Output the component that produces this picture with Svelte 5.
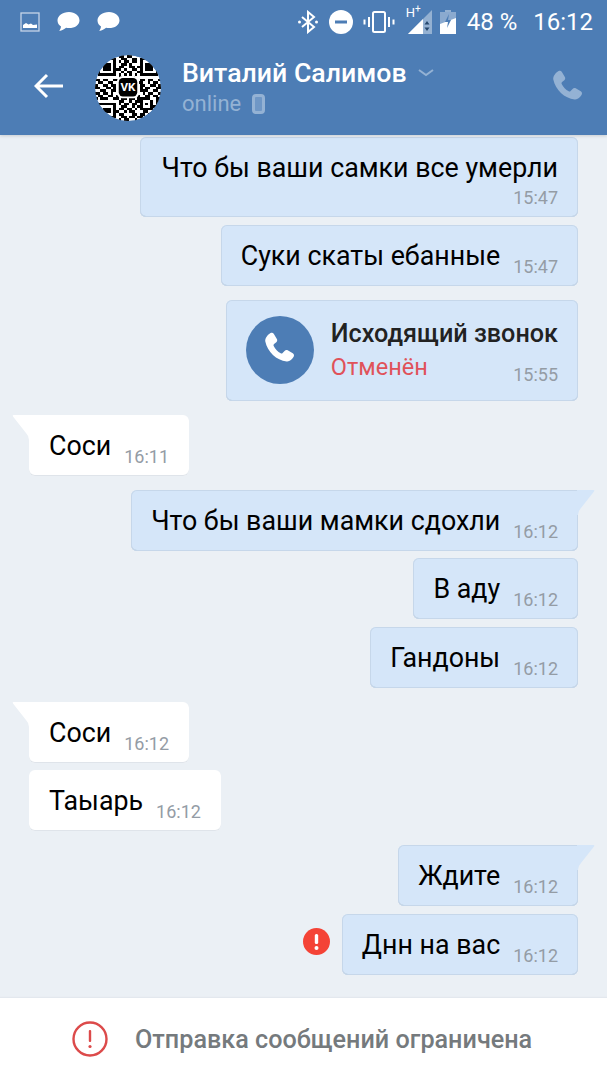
<script lang="ts">
	const RIGHT = 'right';
	const LEFT = 'left';

	const groups = [
		[
			{ side: RIGHT, text: 'Что бы ваши самки все умерли', time: '15:47', stacked: true },
			{ side: RIGHT, text: 'Суки скаты ебанные', time: '15:47' }
		],
		[{ side: RIGHT, call: true, time: '15:55' }],
		[{ side: LEFT, text: 'Соси', time: '16:11', tail: true }],
		[
			{ side: RIGHT, text: 'Что бы ваши мамки сдохли', time: '16:12', tail: true },
			{ side: RIGHT, text: 'В аду', time: '16:12' },
			{ side: RIGHT, text: 'Гандоны', time: '16:12' }
		],
		[
			{ side: LEFT, text: 'Соси', time: '16:12', tail: true },
			{ side: LEFT, text: 'Таыарь', time: '16:12' }
		],
		[
			{ side: RIGHT, text: 'Ждите', time: '16:12', tail: true },
			{ side: RIGHT, text: 'Днн на вас', time: '16:12', failed: true }
		]
	];

	// rough QR pattern, 25 x 25 modules, the logo sits on top of the middle
	const qrRows = [
		'0000000001101100000000000',
		'0111111100110011011111110',
		'0100000101011011010000010',
		'0101110100110100010111010',
		'0101110101100110110111010',
		'0101110111010011010111010',
		'0100000100101100110000010',
		'0111111101010101011111110',
		'0000000001100110000000000',
		'1101100111011001011011001',
		'0110011001100110110010110',
		'1001101100000000011001101',
		'1100110100000000010110011',
		'0011001100000000011100110',
		'1101101000000000001011001',
		'0110011011011001100110110',
		'1011100110110110111110011',
		'0000000001100101110001011',
		'0111111101011011010101010',
		'0100000100110010110001101',
		'0101110101101101011111010',
		'0101110110010110001100110',
		'0100000101100011011011000',
		'0111111100110110110110000',
		'0000000001011001000000000'
	];
	const qrCells = qrRows.flatMap((row, y) =>
		[...row].flatMap((c, x) => (c === '1' ? [{ x, y }] : []))
	);

	const phone =
		'M6.6 2.3c.7-.4 1.5-.2 1.900.500l1.700 2.900c.400.600.200 1.400-.300 1.800L8.600 8.600c-.300.300-.400.700-.200 1.100.900 1.800 2.300 3.200 4 4.200.400.200.800.100 1.100-.200l1.100-1.200c.500-.500 1.200-.600 1.800-.300l2.900 1.700c.700.400.900 1.300.500 2-.900 1.500-2.300 2.900-4 2.700C10 18.100 4.800 12.900 3.600 7.200 3.300 5.300 5 3.200 6.600 2.300z';
</script>

<div class="screen">
	<header class="top">
		<div class="status">
			<div class="status-left">
				<svg width="20" height="20" viewBox="0 0 20 20" aria-hidden="true">
					<rect x="1" y="1" width="18" height="18" fill="none" stroke="#c5d5e8" stroke-width="1.300" />
					<path d="M3 16v-3l3-2 2.500 1.500 2.500-1 2 1.500 4-.5V16z" fill="#fff" />
				</svg>
				<svg width="24" height="22" viewBox="0 0 24 22" aria-hidden="true">
					<path d="M13 1C6.500 1 1.500 4.800 1.500 9.600c0 2.600 1.300 4.600 3.500 6-.1 1.500-.8 3-1.700 4.400 2.600-.5 5-1.800 6.800-3.200 1 .2 1.900.3 2.900.3 6 0 10.500-3.300 10.500-7.700C23.500 4.700 19 1 13 1z" fill="#fff" />
				</svg>
				<svg width="24" height="22" viewBox="0 0 24 22" aria-hidden="true">
					<path d="M13 1C6.500 1 1.500 4.800 1.500 9.600c0 2.600 1.300 4.600 3.500 6-.1 1.500-.8 3-1.700 4.400 2.600-.5 5-1.800 6.800-3.200 1 .2 1.900.3 2.900.3 6 0 10.500-3.300 10.500-7.700C23.500 4.700 19 1 13 1z" fill="#fff" />
				</svg>
			</div>
			<div class="status-right">
				<svg class="st-bt" width="22" height="24" viewBox="0 0 22 24" aria-hidden="true">
					<path d="M5 7l12 10-6 5V2l6 5L5 17" fill="none" stroke="#fff" stroke-width="2" />
					<circle cx="2.500" cy="12" r="1.500" fill="#fff" />
					<circle cx="19.500" cy="12" r="1.500" fill="#fff" />
				</svg>
				<svg class="st-dnd" width="24" height="24" viewBox="0 0 24 24" aria-hidden="true">
					<circle cx="12" cy="12" r="12" fill="#fff" />
					<rect x="6" y="10.500" width="12" height="3" fill="#4d7db5" />
				</svg>
				<svg class="st-vib" width="32" height="24" viewBox="0 0 32 24" aria-hidden="true">
					<rect x="10" y="2" width="12" height="20" rx="1.500" fill="none" stroke="#fff" stroke-width="2" />
					<path d="M6 7v10M26 7v10M1.500 9.500v5M30.500 9.500v5" stroke="#fff" stroke-width="2" />
				</svg>
				<span class="st-sig">
					<span class="st-h">H<sup>+</sup></span>
					<svg width="24" height="24" viewBox="0 0 24 24" aria-hidden="true">
						<path d="M0 24L24 0v24z" fill="#fff" fill-opacity="0.4" />
						<path d="M0 24L15 9v15z" fill="#fff" />
						<path d="M19 11l-2.500 3.500h5zM19 21l-2.500-3.500h5z" fill="#27496e" />
					</svg>
				</span>
				<svg class="st-bat" width="16" height="24" viewBox="0 0 16 24" aria-hidden="true">
					<rect x="5" y="0" width="6" height="2" fill="#fff" fill-opacity="0.4" />
					<rect x="0" y="2" width="16" height="22" fill="#fff" fill-opacity="0.35" />
					<path d="M0 24V14L16 8v16z" fill="#fff" />
					<path d="M9 4L5 12h3l-1 6 4-8H8z" fill="#4d7db5" />
				</svg>
				<span class="st-pct">48 %</span>
				<span class="st-clock">16:12</span>
			</div>
		</div>

		<div class="bar">
			<svg class="back" width="30" height="26" viewBox="0 0 30 26" aria-hidden="true">
				<path d="M29 13H3M13 2L2 13l11 11" fill="none" stroke="#fff" stroke-width="3" />
			</svg>
			<svg class="avatar" width="66" height="66" viewBox="0 0 25 25" aria-hidden="true">
				<circle cx="12.500" cy="12.500" r="12.500" fill="#fff" />
				<g shape-rendering="crispEdges">
					{#each qrCells as cell}
						<rect x={cell.x} y={cell.y} width="1" height="1" fill="#000" />
					{/each}
				</g>
				<rect x="8.300" y="8" width="8.400" height="8.400" rx="2" fill="#fff" />
				<rect x="9" y="8.700" width="7" height="7" rx="1.600" fill="#000" />
				<text x="12.500" y="13.800" class="vk">VK</text>
			</svg>
			<div class="who">
				<div class="name">
					<span>Виталий Салимов</span>
					<svg width="18" height="10" viewBox="0 0 18 10" aria-hidden="true">
						<path d="M2 2l7 5 7-5" fill="none" stroke="#94b2d4" stroke-width="2" />
					</svg>
				</div>
				<div class="online">
					<span>online</span>
					<svg width="13" height="20" viewBox="0 0 13 20" aria-hidden="true">
						<rect x="1.500" y="1.500" width="10" height="17" rx="2.500" fill="#6f97c6" stroke="#94b2d4" stroke-width="3" />
					</svg>
				</div>
			</div>
			<svg class="call" width="42" height="42" viewBox="0 0 24 24" aria-hidden="true">
				<path d={phone} fill="#94b2d4" />
			</svg>
		</div>
	</header>

	<main class="chat">
		{#each groups as group}
			<section class="group">
				{#each group as msg}
					<div class="row {msg.side}">
						{#if msg.failed}
							<svg class="failed" width="27" height="27" viewBox="0 0 27 27" aria-hidden="true">
								<circle cx="13.500" cy="13.500" r="13.500" fill="#f44336" />
								<rect x="11.800" y="6" width="3.400" height="10" rx="1.500" fill="#fff" />
								<circle cx="13.500" cy="20" r="2" fill="#fff" />
							</svg>
						{/if}
						<div class="bubble {msg.side}" class:tail={msg.tail} class:stacked={msg.stacked} class:callcard={msg.call}>
							{#if msg.tail}
								<svg class="tip" width="18" height="25" viewBox="0 0 18 25" aria-hidden="true">
									{#if msg.side === RIGHT}
										<path d="M0 0H16.500Q18 0 17 1.500L4 18Q1 21 1 25H0z" class="tip-fill" />
									{:else}
										<path d="M18 0H1.500Q0 0 1 1.500L14 18Q17 21 17 25H18z" class="tip-fill" />
									{/if}
								</svg>
							{/if}
							{#if msg.call}
								<span class="call-icon">
									<svg width="42" height="42" viewBox="0 0 24 24" aria-hidden="true">
										<path d={phone} fill="#fff" />
									</svg>
								</span>
								<div class="call-body">
									<div class="call-title">Исходящий звонок</div>
									<div class="call-state">Отменён</div>
								</div>
							{:else}
								<span class="text">{msg.text}</span>
							{/if}
							<span class="time">{msg.time}</span>
						</div>
					</div>
				{/each}
			</section>
		{/each}
	</main>

	<footer class="blocked">
		<svg width="36" height="36" viewBox="0 0 36 36" aria-hidden="true">
			<circle cx="18" cy="18" r="16.500" fill="none" stroke="#dc4a4a" stroke-width="2.400" />
			<rect x="16.800" y="9" width="2.400" height="12" rx="1" fill="#dc4a4a" />
			<circle cx="18" cy="25.500" r="1.600" fill="#dc4a4a" />
		</svg>
		<span>Отправка сообщений ограничена</span>
	</footer>
</div>

<style>
	:global(body) {
		background: #ebf0f5;
	}

	.screen {
		width: 607px;
		height: 1080px;
		display: flex;
		flex-direction: column;
		overflow: hidden;
		font-family: Roboto, 'Liberation Sans', sans-serif;
		background: #ebf0f5;
	}

	.top {
		height: 135px;
		flex: none;
		background: #4d7db5;
		box-shadow: 0 1px 3px rgba(0, 0, 0, 0.15);
		position: relative;
		z-index: 1;
	}

	.status {
		height: 43px;
		display: flex;
		align-items: center;
		justify-content: space-between;
		padding: 0 14px 0 20px;
		color: #fff;
	}

	.status-left {
		display: flex;
		align-items: center;
		gap: 16px;
	}

	.status-right {
		display: flex;
		align-items: center;
	}

	.st-dnd {
		margin-left: 10px;
	}

	.st-vib {
		margin-left: 10px;
	}

	.st-sig {
		display: flex;
		align-items: flex-end;
		margin-left: 13px;
		position: relative;
		width: 24px;
		height: 24px;
	}

	.st-h {
		position: absolute;
		left: -2px;
		top: -4px;
		font-size: 13px;
		line-height: 14px;
	}

	.st-h sup {
		font-size: 10px;
		line-height: 0;
	}

	.st-bat {
		margin-left: 8px;
	}

	.st-pct {
		margin-left: 11px;
		font-size: 24px;
	}

	.st-clock {
		margin-left: 16px;
		font-size: 24px;
	}

	.bar {
		height: 92px;
		display: flex;
		align-items: center;
		padding-left: 34px;
		padding-right: 18px;
	}

	.back {
		flex: none;
		margin-top: -6px;
	}

	.avatar {
		flex: none;
		margin-left: 31px;
		margin-top: -2px;
		clip-path: circle(50%);
	}

	.vk {
		font-size: 4.400px;
		font-weight: 700;
		fill: #fff;
		text-anchor: middle;
	}

	.who {
		margin-left: 21px;
		flex: 1;
		margin-top: -2px;
	}

	.name {
		display: flex;
		align-items: center;
		gap: 10px;
		color: #fff;
		font-size: 26.700px;
		font-weight: 500;
		line-height: 30px;
	}

	.online {
		display: flex;
		align-items: center;
		gap: 11px;
		color: #94b2d4;
		font-size: 22px;
		line-height: 30px;
		margin-top: 1px;
	}

	.call {
		flex: none;
		margin-top: -2px;
	}

	.chat {
		flex: 1;
		display: flex;
		flex-direction: column;
		gap: 14px;
		padding-top: 2px;
	}

	.group {
		display: flex;
		flex-direction: column;
		gap: 7.500px;
	}

	.row {
		display: flex;
		align-items: center;
	}

	.row.right {
		justify-content: flex-end;
		padding-right: 29px;
	}

	.row.left {
		padding-left: 29px;
	}

	.failed {
		margin-right: 12px;
		margin-bottom: 6px;
	}

	.bubble {
		position: relative;
		display: flex;
		height: 61px;
		box-sizing: border-box;
		padding: 0 20px;
		border-radius: 6px;
		color: #000;
		font-size: 26.800px;
		--fill: #fff;
		background: var(--fill);
		box-shadow: inset 0 -1px 0 #dfe4ea;
	}

	.bubble.right {
		--fill: #d5e6f9;
		box-shadow: inset 0 0 0 1px #c6d7ea, inset 0 -1px 0 #b9c9da;
	}

	.bubble.tail.right {
		border-top-right-radius: 0;
	}

	.bubble.tail.left {
		border-top-left-radius: 0;
	}

	.tip {
		position: absolute;
		top: 0;
	}

	.bubble.right .tip {
		left: calc(100% - 1px);
	}

	.bubble.left .tip {
		right: calc(100% - 1px);
	}

	.tip-fill {
		fill: var(--fill);
	}

	.text {
		align-self: center;
		line-height: 30px;
		margin-top: 1px;
		white-space: nowrap;
	}

	.time {
		align-self: flex-end;
		margin-left: 13px;
		margin-bottom: 8px;
		color: #949ca5;
		font-size: 18px;
		line-height: 22px;
	}

	.bubble.stacked {
		height: 80px;
		flex-direction: column;
		padding-left: 22px;
	}

	.bubble.stacked .text {
		margin-top: 16px;
	}

	.bubble.stacked .time {
		margin: auto 0 8px;
	}

	.bubble.callcard {
		height: 101px;
		padding: 0 20px;
		align-items: center;
	}

	.call-icon {
		flex: none;
		width: 68px;
		height: 68px;
		border-radius: 50%;
		background: #4d7db5;
		display: flex;
		align-items: center;
		justify-content: center;
	}

	.call-body {
		margin-left: 17px;
		align-self: flex-start;
		padding-top: 19px;
	}

	.call-title {
		font-size: 25.200px;
		font-weight: 500;
		line-height: 30px;
		color: #222;
		white-space: nowrap;
	}

	.call-state {
		font-size: 23.500px;
		line-height: 30px;
		color: #e0525a;
		margin-top: 3px;
	}

	.bubble.callcard .time {
		position: absolute;
		right: 20px;
		bottom: 15px;
		margin: 0;
	}

	.blocked {
		flex: none;
		height: 82px;
		background: #fff;
		display: flex;
		align-items: center;
		padding-left: 72px;
		gap: 27px;
		color: #757a7d;
		font-size: 25.200px;
		font-weight: 500;
		box-shadow: 0 -1px 1px #e3e8ee;
	}
</style>
